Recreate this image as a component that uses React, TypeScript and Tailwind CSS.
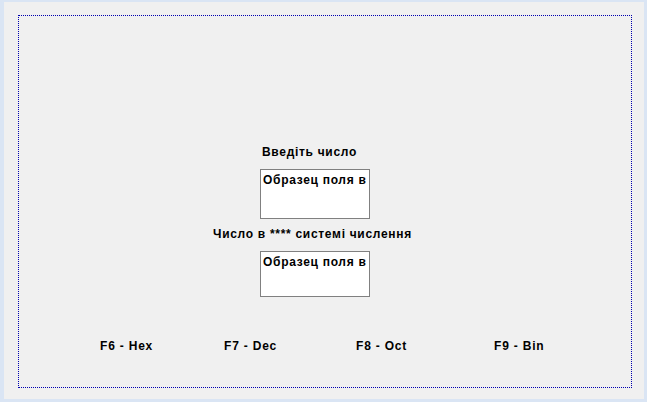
export default function App() {
  const font = { fontFamily: '"Liberation Sans", Arial, sans-serif' };
  return (
    <div className="w-[647px] h-[402px] bg-[#dae5f4] pl-[4px] pt-[2px] pr-[3px] pb-[3px]" style={font}>
      <div className="w-full h-full bg-[#f0f0f0] pl-[14px] pt-[13px]">
        <div className="w-[614px] h-[373px] border border-dotted border-[#0000b0] flex flex-col text-[12px] font-bold text-black leading-[14px] tracking-[0.7px]">
          <div className="h-[129px] shrink-0" />
          <div className="ml-[243px] whitespace-nowrap">Введіть число</div>
          <div className="h-[10px] shrink-0" />
          <div className="ml-[241px] w-[110px] h-[50px] shrink-0 bg-white border border-[#808080] pl-[2px] pt-[3px] overflow-hidden whitespace-nowrap">
            Образец поля в
          </div>
          <div className="h-[8px] shrink-0" />
          <div className="ml-[194px] whitespace-nowrap">Число в **** системі числення</div>
          <div className="h-[10px] shrink-0" />
          <div className="ml-[241px] w-[110px] h-[46px] shrink-0 bg-white border border-[#808080] pl-[2px] pt-[3px] overflow-hidden whitespace-nowrap">
            Образец поля в
          </div>
          <div className="h-[42px] shrink-0" />
          <div className="flex relative h-[14px] shrink-0 tracking-[0.8px]">
            <span className="absolute left-[81px] whitespace-nowrap">F6 - Hex</span>
            <span className="absolute left-[205px] whitespace-nowrap">F7 - Dec</span>
            <span className="absolute left-[337px] whitespace-nowrap">F8 - Oct</span>
            <span className="absolute left-[475px] whitespace-nowrap">F9 - Bin</span>
          </div>
        </div>
      </div>
    </div>
  );
}
